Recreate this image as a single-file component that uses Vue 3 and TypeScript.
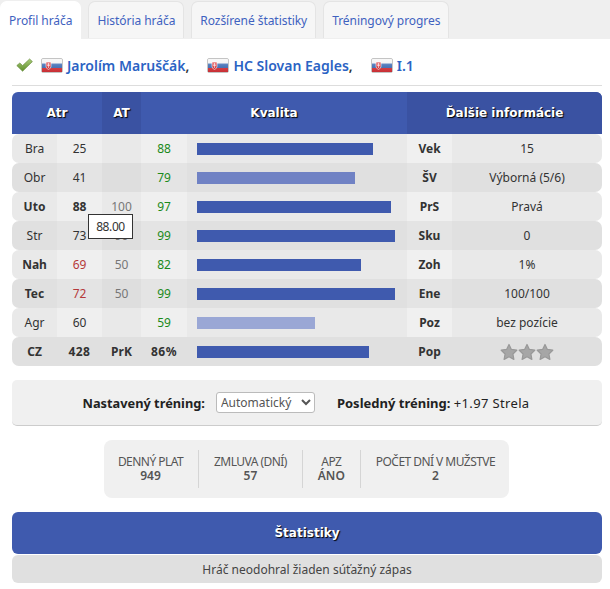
<template>
  <div class="page">
    <nav class="tabs">
      <a v-for="(tab, i) in tabs" :key="tab" class="tab" :class="{ active: i === 0 }">{{ tab }}</a>
    </nav>

    <div class="content">
      <div class="title">
        <svg class="check" viewBox="0 0 17 14" width="17" height="14">
          <defs>
            <linearGradient id="checkFill" x1="0" y1="0" x2="0" y2="1">
              <stop offset="0" stop-color="#a9cb78" />
              <stop offset="1" stop-color="#5f8f2c" />
            </linearGradient>
            <linearGradient id="flagGloss" x1="0" y1="0" x2="0" y2="1">
              <stop offset="0" stop-color="#fff" stop-opacity="0.45" />
              <stop offset="0.5" stop-color="#fff" stop-opacity="0.1" />
              <stop offset="1" stop-color="#000" stop-opacity="0.08" />
            </linearGradient>
          </defs>
          <path d="M0.8 7.6 L3.8 5 L6.6 7.6 L13.6 1 L16.4 3.6 L6.6 13.2 Z" fill="url(#checkFill)" stroke="#6c8f45" stroke-width="0.7" stroke-linejoin="round" />
        </svg>
        <template v-for="(item, i) in titleItems" :key="item">
          <svg class="flag" viewBox="0 0 22 15" width="22" height="15">
            <rect x="0.5" y="0.5" width="21" height="14" rx="1.5" fill="#f2f2f2" stroke="#c4c4c4" />
            <rect x="1" y="5.5" width="20" height="4.5" fill="#3f6db5" />
            <rect x="1" y="10" width="20" height="4" fill="#d9343a" />
            <path d="M5 4 h5 v4.5 q0 2 -2.5 3 q-2.5 -1 -2.5 -3 Z" fill="#d9343a" stroke="#fff" stroke-width="0.6" />
            <path d="M7.5 5 v5 M6.3 6.2 h2.4 M6 7.6 h3" stroke="#fff" stroke-width="0.6" />
            <rect x="1" y="1" width="20" height="13" fill="url(#flagGloss)" />
          </svg>
          <a class="title-link">{{ item }}</a><span v-if="i < titleItems.length - 1" class="comma">,</span>
        </template>
      </div>

      <div class="attrs">
        <div class="row head">
          <div class="cell span2">Atr</div>
          <div class="cell dark">AT</div>
          <div class="cell span2">Kvalita</div>
          <div class="cell span2 dark">Ďalšie informácie</div>
        </div>
        <div v-for="(row, i) in rows" :key="row.name" class="row body" :class="{ even: i % 2 === 1, last: i === rows.length - 1 }">
          <div class="cell c1" :class="{ bold: row.bold }">{{ row.name }}</div>
          <div class="cell c2" :class="[row.tone, { bold: row.bold }]">{{ row.value }}</div>
          <div class="cell c3" :class="{ muted: i < 7 }">{{ row.at }}</div>
          <div class="cell c4" :class="{ green: i < 7 }">{{ row.quality }}</div>
          <div class="cell c5">
            <span class="bar" :style="{ width: row.bar * 2 + 'px', background: row.color }"></span>
          </div>
          <div class="cell c6">{{ row.info }}</div>
          <div class="cell c7">
            <template v-if="row.detail">{{ row.detail }}</template>
            <span v-else class="stars">
              <svg v-for="n in 3" :key="n" viewBox="0 0 24 24" width="18" height="18">
                <path d="M12 2 L15.2 8.6 L22.4 9.6 L17.2 14.6 L18.5 21.8 L12 18.4 L5.5 21.8 L6.8 14.6 L1.6 9.6 L8.8 8.6 Z" fill="#a6a6a6" stroke="#999" stroke-width="1.6" stroke-linejoin="round" />
              </svg>
            </span>
          </div>
        </div>
        <div class="tooltip">88.00</div>
      </div>

      <div class="training">
        <b class="setting">Nastavený tréning:</b>
        <select class="select">
          <option>Automatický</option>
        </select>
        <span class="last-training"><b>Posledný tréning:</b> <span class="gain">+1.97 Strela</span></span>
      </div>

      <div class="contract">
        <div v-for="item in contract" :key="item.label" class="contract-item">
          <div class="contract-label">{{ item.label }}</div>
          <div class="contract-value">{{ item.value }}</div>
        </div>
      </div>

      <button class="stats-btn">Štatistiky</button>
      <div class="no-matches">Hráč neodohral žiaden súťažný zápas</div>
    </div>
  </div>
</template>

<script setup lang="ts">
const tabs = ['Profil hráča', 'História hráča', 'Rozšírené štatistiky', 'Tréningový progres']
const titleItems = ['Jarolím Maruščák', 'HC Slovan Eagles', 'I.1']

const solid = '#3f5aae'

const rows = [
  { name: 'Bra', value: '25', at: '', quality: '88', bar: 88, color: solid, info: 'Vek', detail: '15', bold: false, tone: '' },
  { name: 'Obr', value: '41', at: '', quality: '79', bar: 79, color: '#7082c4', info: 'ŠV', detail: 'Výborná (5/6)', bold: false, tone: '' },
  { name: 'Uto', value: '88', at: '100', quality: '97', bar: 97, color: solid, info: 'PrS', detail: 'Pravá', bold: true, tone: '' },
  { name: 'Str', value: '73', at: '90', quality: '99', bar: 99, color: solid, info: 'Sku', detail: '0', bold: false, tone: '' },
  { name: 'Nah', value: '69', at: '50', quality: '82', bar: 82, color: solid, info: 'Zoh', detail: '1%', bold: true, tone: 'red' },
  { name: 'Tec', value: '72', at: '50', quality: '99', bar: 99, color: solid, info: 'Ene', detail: '100/100', bold: true, tone: 'red' },
  { name: 'Agr', value: '60', at: '', quality: '59', bar: 59, color: '#9aa7d5', info: 'Poz', detail: 'bez pozície', bold: false, tone: '' },
  { name: 'CZ', value: '428', at: 'PrK', quality: '86%', bar: 86, color: solid, info: 'Pop', detail: '', bold: true, tone: '' },
]

const contract = [
  { label: 'DENNÝ PLAT', value: '949' },
  { label: 'ZMLUVA (DNÍ)', value: '57' },
  { label: 'APZ', value: 'ÁNO' },
  { label: 'POČET DNÍ V MUŽSTVE', value: '2' },
]
</script>

<style>
body {
  background: #fff;
}
</style>

<style scoped>
.page {
  width: 610px;
  height: 589px;
  overflow: hidden;
  font-family: "Noto Sans", "Open Sans", sans-serif;
  font-size: 12px;
  color: #333;
}

.tabs {
  display: flex;
  height: 39px;
  gap: 7px;
  background: #efefef;
  box-sizing: border-box;
}
.tab {
  display: flex;
  align-items: center;
  justify-content: center;
  height: 37px;
  margin-top: 1px;
  padding: 0 8px;
  background: #f6f6f6;
  border: 1px solid #e4e4e4;
  border-bottom: 0;
  border-radius: 7px 7px 0 0;
  color: #3f62c0;
  box-sizing: border-box;
  letter-spacing: -0.05px;
}
.tab.active {
  height: 38px;
  background: #fff;
  border-color: #fff;
}

.content {
  padding: 0 8px 0 12px;
}

.title {
  display: flex;
  align-items: center;
  height: 47px;
  padding: 6px 0 0 4px;
  box-sizing: border-box;
  border-bottom: 1px solid #ddd;
  font-size: 14px;
  font-weight: 600;
}
.check {
  margin-right: 8px;
}
.flag {
  margin-right: 4px;
}
.title-link {
  color: #2b63c4;
}
.comma {
  color: #333;
  margin-right: 18px;
}

.attrs {
  position: relative;
  margin-top: 6px;
}
.row {
  display: grid;
  grid-template-columns: 45px 45px 39px 46px 220px 45px 150px;
}
.head {
  height: 42px;
  background: #3f5aae;
  border-radius: 6px 6px 0 0;
  overflow: hidden;
  color: #fff;
  font-family: "DejaVu Sans", sans-serif;
  font-weight: 700;
  font-size: 12px;
  text-shadow: 1px 1px 1px #000;
}
.span2 {
  grid-column: span 2;
}
.head .dark {
  background: #3a52a2;
}
.cell {
  display: flex;
  align-items: center;
  justify-content: center;
}
.body {
  height: 29px;
  background: #e9e9e9;
  border-radius: 7px;
  overflow: hidden;
}
.body.even {
  background: #e0e0e0;
}
.c2,
.c4 {
  background: #efefef;
}
.c6 {
  background: #f0f0f0;
  font-weight: 700;
}
.c3 {
  background: #e9e9e9;
}
.even .c2,
.even .c4,
.even .c6 {
  background: #e4e4e4;
}
.even .c3 {
  background: #dedede;
}
.c5 {
  justify-content: flex-start;
  padding-left: 10px;
}
.bar {
  display: block;
  height: 12px;
}
.last .c2,
.last .c3,
.last .c4,
.last .c6 {
  background: #e0e0e0;
  font-weight: 700;
}
.last .c2,
.last .c4 {
  letter-spacing: 0.4px;
}
.bold {
  font-weight: 700;
}
.muted {
  color: #777;
}
.green {
  color: #1a8a1a;
}
.red {
  color: #b5393a;
  font-weight: 400;
}
.stars {
  display: flex;
}
.tooltip {
  position: absolute;
  left: 76px;
  top: 122px;
  width: 45px;
  height: 25px;
  display: flex;
  align-items: center;
  justify-content: center;
  box-sizing: border-box;
  background: #fff;
  border: 1px solid #333;
  letter-spacing: -0.4px;
}

.training {
  display: flex;
  align-items: center;
  justify-content: center;
  height: 46px;
  margin-top: 14px;
  padding-right: 2px;
  background: #f0f0f0;
  border-bottom: 1px solid #ccc;
  border-radius: 5px;
  box-sizing: border-box;
  font-size: 13px;
  color: #222;
}
.setting {
  font-size: 12.8px;
}
.gain {
  letter-spacing: 0.35px;
}
.select {
  width: 99px;
  height: 21px;
  margin: 0 22px 0 11px;
  font-family: inherit;
  font-size: 12px;
  color: #555;
  background: #fff;
  border: 1px solid #bbb;
  border-radius: 3px;
}

.contract {
  display: flex;
  align-items: center;
  width: 405px;
  height: 58px;
  margin: 14px 0 0 92px;
  padding: 10px 0;
  background: #f0f0f0;
  border-radius: 8px;
  box-sizing: border-box;
  justify-content: center;
  font-size: 12px;
  color: #555;
  white-space: nowrap;
}
.contract-label {
  letter-spacing: -0.55px;
}
.contract-item {
  padding: 0 15px 0;
  height: 38px;
  text-align: center;
  line-height: 14px;
  box-sizing: border-box;
  display: flex;
  flex-direction: column;
  justify-content: center;
  border-left: 1px solid #d5d5d5;
}
.contract-item:first-child {
  border-left: 0;
}
.contract-value {
  font-weight: 600;
}

.stats-btn {
  display: block;
  width: 590px;
  height: 42px;
  margin-top: 14px;
  background: #3f5aae;
  border: 0;
  border-radius: 6px;
  color: #fff;
  font-family: "DejaVu Sans", sans-serif;
  font-size: 12px;
  font-weight: 700;
  text-shadow: 1px 1px 1px #000;
}
.no-matches {
  height: 28px;
  margin-top: 1px;
  display: flex;
  align-items: center;
  justify-content: center;
  background: #e0e0e0;
  border-radius: 6px;
  font-size: 12px;
  color: #444;
}
</style>
